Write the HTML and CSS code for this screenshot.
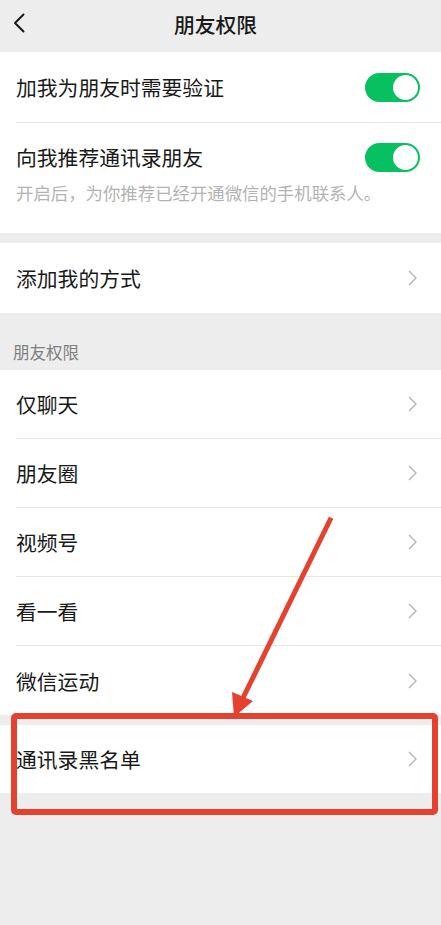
FILE: index.html
```html
<!DOCTYPE html>
<html lang="zh">
<head>
<meta charset="utf-8">
<title>朋友权限</title>
<link rel="stylesheet" href="styles.css">
</head>
<body>
<div class="page">
  <header class="nav">
    <span class="back">
      <svg width="12" height="20" viewBox="0 0 12 20"><polyline points="10.5,1.5 2,10 10.5,18.5" fill="none" stroke="#1a1a1a" stroke-width="2" stroke-linecap="round" stroke-linejoin="round"/></svg>
    </span>
    <h1 class="title">朋友权限</h1>
    <span class="nav-spacer"></span>
  </header>

  <section class="group">
    <div class="row">
      <div class="row-inner h71 pr21">
        <span class="label">加我为朋友时需要验证</span>
        <span class="switch"><span class="knob"></span></span>
      </div>
    </div>
    <div class="row">
      <div class="block-row">
        <div class="block-head">
          <span class="label">向我推荐通讯录朋友</span>
          <span class="switch"><span class="knob"></span></span>
        </div>
        <p class="hint">开启后，为你推荐已经开通微信的手机联系人。</p>
      </div>
    </div>
  </section>

  <section class="group gap">
    <div class="row">
      <div class="row-inner h70 no-line">
        <span class="label">添加我的方式</span>
        <svg class="chev" width="9" height="16" viewBox="0 0 9 16"><polyline points="1,1 8,8 1,15" fill="none" stroke="#b4b4b4" stroke-width="1.4"/></svg>
      </div>
    </div>
  </section>

  <div class="section-label">朋友权限</div>

  <section class="group">
    <div class="row">
      <div class="row-inner">
        <span class="label">仅聊天</span>
        <svg class="chev" width="9" height="16" viewBox="0 0 9 16"><polyline points="1,1 8,8 1,15" fill="none" stroke="#b4b4b4" stroke-width="1.4"/></svg>
      </div>
    </div>
    <div class="row">
      <div class="row-inner">
        <span class="label">朋友圈</span>
        <svg class="chev" width="9" height="16" viewBox="0 0 9 16"><polyline points="1,1 8,8 1,15" fill="none" stroke="#b4b4b4" stroke-width="1.4"/></svg>
      </div>
    </div>
    <div class="row">
      <div class="row-inner">
        <span class="label">视频号</span>
        <svg class="chev" width="9" height="16" viewBox="0 0 9 16"><polyline points="1,1 8,8 1,15" fill="none" stroke="#b4b4b4" stroke-width="1.4"/></svg>
      </div>
    </div>
    <div class="row">
      <div class="row-inner">
        <span class="label">看一看</span>
        <svg class="chev" width="9" height="16" viewBox="0 0 9 16"><polyline points="1,1 8,8 1,15" fill="none" stroke="#b4b4b4" stroke-width="1.4"/></svg>
      </div>
    </div>
    <div class="row">
      <div class="row-inner no-line">
        <span class="label">微信运动</span>
        <svg class="chev" width="9" height="16" viewBox="0 0 9 16"><polyline points="1,1 8,8 1,15" fill="none" stroke="#b4b4b4" stroke-width="1.4"/></svg>
      </div>
    </div>
  </section>

  <section class="group gap">
    <div class="row">
      <div class="row-inner h68 no-line">
        <span class="label">通讯录黑名单</span>
        <svg class="chev" width="9" height="16" viewBox="0 0 9 16"><polyline points="1,1 8,8 1,15" fill="none" stroke="#b4b4b4" stroke-width="1.4"/></svg>
      </div>
    </div>
  </section>

  <svg class="annot" width="441" height="925" viewBox="0 0 441 925">
    <rect x="14" y="716" width="421" height="96" rx="2" fill="none" stroke="#e5412f" stroke-width="6"/>
    <line x1="330" y1="520" x2="242" y2="700" stroke="#e5412f" stroke-width="5" stroke-linecap="square"/>
    <polygon points="234,717 253,701 232,692" fill="#e5412f"/>
  </svg>
</div>
</body>
</html>
```

FILE: styles.css
```css
* { box-sizing: border-box; }

html, body {
  margin: 0;
  padding: 0;
  background: #ededed;
}

body {
  font-family: "Noto Sans CJK SC", "Noto Sans", sans-serif;
  color: #1a1a1a;
}

.page {
  position: relative;
  width: 441px;
  min-height: 925px;
  background: #ededed;
}

.nav {
  height: 52px;
  padding: 0 13px 4px 13px;
  display: grid;
  grid-template-columns: 40px 1fr 40px;
  align-items: center;
}

.back {
  display: flex;
  align-items: center;
  height: 20px;
  margin-top: -3px;
}

.title {
  margin: 0;
  text-align: center;
  font-size: 20.8px;
  font-weight: 500;
  line-height: 28px;
  color: #191919;
  padding-right: 10px;
}

.group {
  background: #fff;
}

.gap {
  margin-top: 10px;
}

.row {
  padding-left: 16px;
}

.row-inner {
  display: flex;
  align-items: center;
  justify-content: space-between;
  height: 69px;
  padding-right: 24px;
  border-bottom: 1px solid #e6e6e6;
}

.no-line {
  border-bottom: none;
}

.h71 { height: 71px; }
.h70 { height: 70px; }
.h68 { height: 68px; }
.pr21 { padding-right: 21px; }

.block-row {
  height: 110px;
  padding-top: 20px;
  padding-right: 21px;
}

.block-head {
  display: flex;
  align-items: center;
  justify-content: space-between;
  height: 28px;
}

.label {
  font-size: 20.8px;
  line-height: 28px;
  color: #191919;
}

.hint {
  margin: 10px 0 0 0;
  font-size: 17.4px;
  line-height: 24px;
  color: #b3b3b3;
  white-space: nowrap;
}

.switch {
  position: relative;
  display: block;
  width: 55px;
  height: 29px;
  border-radius: 15px;
  background: #07c160;
}

.knob {
  position: absolute;
  top: 2px;
  right: 2px;
  width: 25px;
  height: 25px;
  border-radius: 50%;
  background: #fff;
}

.chev {
  display: block;
}

.section-label {
  height: 57px;
  padding: 28px 0 0 13px;
  font-size: 16.5px;
  line-height: 22px;
  color: #7f7f7f;
}

.annot {
  position: absolute;
  left: 0;
  top: 0;
  pointer-events: none;
}
```
